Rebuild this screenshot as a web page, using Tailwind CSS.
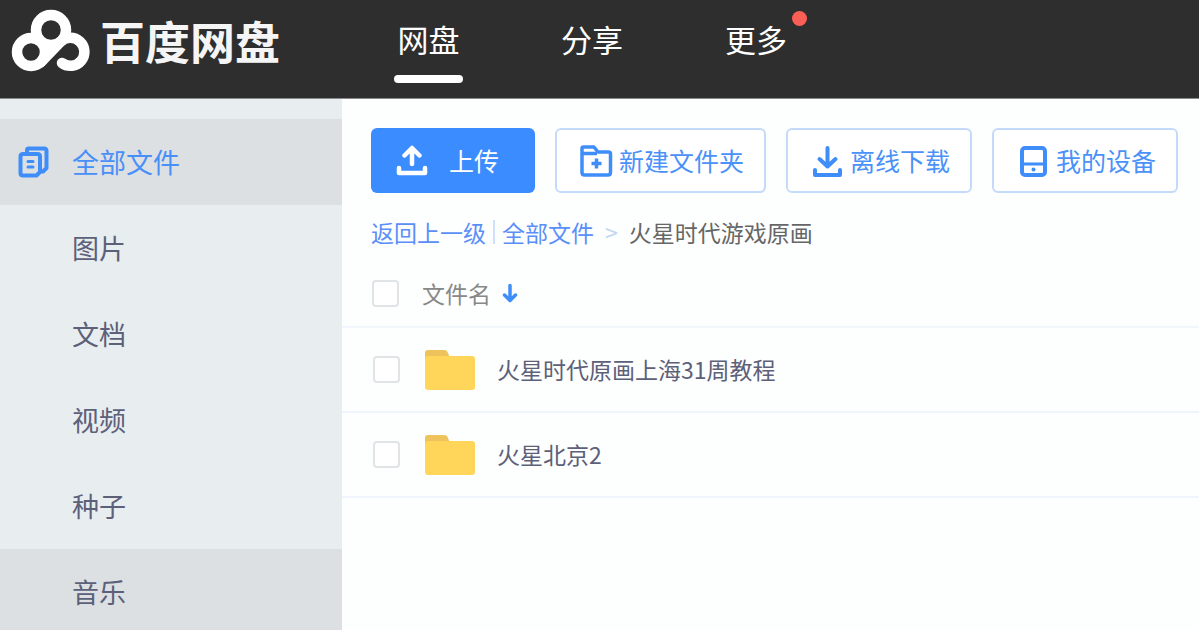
<!DOCTYPE html>
<html lang="zh-CN">
<head>
<meta charset="utf-8">
<meta name="viewport" content="width=device-width, initial-scale=1">
<title>百度网盘</title>
<script src="https://cdn.jsdelivr.net/npm/@tailwindcss/browser@4"></script>
</head>
<body class="flex h-screen flex-col overflow-hidden bg-[#fdfefe] font-['Noto_Sans_CJK_SC',sans-serif]">
<header class="flex h-[99px] shrink-0 border-b border-[#8a8a8a] bg-[#2e2e2e] text-white">
  <a href="#" class="flex w-[342px] items-start pl-[10px] pt-2">
    <svg class="mr-2 h-[66px] w-[82px] shrink-0" viewBox="0 0 82 66" fill="none" stroke="#fff" stroke-width="10.500" stroke-linecap="round" aria-hidden="true">
      <path d="M30 30H55V36L34 56L28 52L31 44Z" fill="#fff" stroke="none"/>
      <circle cx="41" cy="22" r="15" fill="#2e2e2e"/>
      <circle cx="21" cy="44" r="14" fill="#2e2e2e"/>
      <path d="M30.700 54.300L50.700 33.700A14 14 0 1 1 52 55"/>
    </svg>
    <span class="whitespace-nowrap text-[45px] font-bold leading-[65px] text-[#f5f5f5]">百度网盘</span>
  </a>
  <nav class="flex gap-[98px] pl-[52px] pt-4 text-[31px] leading-[45px]">
    <a href="#" class="flex flex-col items-center"><span>网盘</span><span class="mt-[14px] h-2 w-[69px] rounded-full bg-white"></span></a>
    <a href="#">分享</a>
    <a href="#" class="relative ml-1">更多<span class="absolute -right-5 -top-[5px] size-[15px] rounded-full bg-[#fa5f56]"></span></a>
  </nav>
</header>
<div class="flex min-h-0 flex-1">
  <aside class="w-[342px] shrink-0 overflow-hidden bg-[#e8edf0] pt-5 text-[27px] text-[#5c6078]">
    <a href="#" class="flex h-[86px] items-center bg-[#dce0e3] pl-[18px] text-[#488ff8]">
      <svg class="mr-[22px] size-8 shrink-0" viewBox="0 0 32 32" fill="none" stroke="#3f8df9" stroke-width="4" stroke-linejoin="round" stroke-linecap="round" aria-hidden="true">
        <path d="M9 5.500V4Q9 2.500 10.500 2.500H26Q28.500 2.500 28.500 5V22L25 25.500H24"/>
        <path d="M5 8H19.500Q22 8 22 10.500V26L18.500 29.500H5Q2.500 29.500 2.500 27V10.500Q2.500 8 5 8Z"/>
        <path d="M10 15.500h5M10 21h5" stroke-width="3"/>
      </svg>全部文件</a>
    <a href="#" class="flex h-[86px] items-center pl-[72px]">图片</a>
    <a href="#" class="flex h-[86px] items-center pl-[72px]">文档</a>
    <a href="#" class="flex h-[86px] items-center pl-[72px]">视频</a>
    <a href="#" class="flex h-[86px] items-center pl-[72px]">种子</a>
    <a href="#" class="flex h-[86px] items-center bg-[#dce0e3] pl-[72px]">音乐</a>
  </aside>
  <main class="min-w-0 flex-1 pt-[29px]">
    <div class="flex gap-5 whitespace-nowrap pl-[29px] text-[25px] text-[#4a91f8]">
      <button class="flex h-[65px] items-center rounded-md bg-[#3b8cff] pl-[25px] pr-9 text-white">
        <svg class="mr-[21px] size-8" viewBox="0 0 32 32" fill="none" stroke="currentColor" stroke-width="4.500" stroke-linecap="round" stroke-linejoin="round" aria-hidden="true"><path d="M16 19V4M8.500 10.500l7.500-7.500 7.500 7.500M3 23v5h26v-5"/></svg>上传</button>
      <button class="flex h-[65px] items-center gap-[6px] rounded-md border-2 border-[#c4dafa] bg-white pl-[22px] pr-5">
        <svg class="size-[34px]" viewBox="0 0 34 34" fill="none" stroke="#3f8df9" stroke-width="3.500" stroke-linejoin="round" aria-hidden="true"><path d="M3 9.500V4.500Q3 3 4.500 3H15l4 5H29.500Q31.500 8 31.500 10V28.500Q31.500 31 29 31H5.500Q3 31 3 28.500V9.500H18M17.500 14.500v10M12.500 19.500h10"/></svg>新建文件夹</button>
      <button class="flex h-[65px] items-center gap-[6px] rounded-md border-2 border-[#c4dafa] bg-white pl-[22px] pr-5">
        <svg class="size-[34px]" viewBox="0 0 34 34" fill="none" stroke="#3f8df9" stroke-width="4" stroke-linecap="round" stroke-linejoin="round" aria-hidden="true"><path d="M17.500 4v18M9.500 15l8 7.500 8-7.500M5 26v5h25v-5"/></svg>离线下载</button>
      <button class="flex h-[65px] items-center gap-[6px] rounded-md border-2 border-[#c4dafa] bg-white pl-[22px] pr-5">
        <svg class="size-[34px]" viewBox="0 0 34 34" fill="none" stroke="#3f8df9" stroke-width="4" aria-hidden="true"><rect x="6" y="4" width="23" height="27" rx="3"/><path d="M6 20h23" stroke-width="3"/><circle cx="17.500" cy="25.500" r="2" fill="#3f8df9" stroke="none"/></svg>我的设备</button>
    </div>
    <div class="mt-[22px] flex h-[34px] items-center whitespace-nowrap pl-[29px] text-[23px] text-[#5b8ff8]">
      <a href="#">返回上一级</a>
      <span class="mx-[7px] h-6 w-[2px] bg-[#d0e0fb]"></span>
      <a href="#">全部文件</a>
      <span class="mx-[11px] text-[#c0d6ee]">&gt;</span>
      <span class="text-[#666]">火星时代游戏原画</span>
    </div>
    <table class="mt-[11px] w-full border-collapse text-left text-[23px]">
      <thead>
        <tr class="h-[67px] border-b-2 border-[#f2f6fd] text-[#888]">
          <th class="w-20 pl-[30px] font-normal"><input type="checkbox" aria-label="全选" class="block size-[27px] appearance-none rounded-sm border-2 border-[#e0e4e6] bg-white"></th>
          <th class="font-normal"><div class="flex items-center">文件名
            <svg class="ml-[11px] h-5 w-4" viewBox="0 0 16 20" fill="none" stroke="#3f8df9" stroke-width="3.500" stroke-linecap="round" stroke-linejoin="round" aria-hidden="true"><path d="M8 2.500V17M2.500 12L8 17.500 13.500 12"/></svg></div></th>
        </tr>
      </thead>
      <tbody class="text-[#5c6078]">
        <tr class="h-[85px] border-b-2 border-[#f0f4fd]">
          <td class="pl-[31px]"><input id="f1" type="checkbox" class="block size-[27px] appearance-none rounded-sm border-2 border-[#e0e4e6] bg-white"></td>
          <td><label for="f1" class="flex items-center">
            <svg class="mr-[21px] h-[42px] w-[54px]" viewBox="0 0 54 42" aria-hidden="true"><path d="M3 12V4Q3 1 6 1H22Q25 1 26 4L28 9V12Z" fill="#efc35b"/><rect x="3" y="7" width="50" height="34" rx="3" fill="#ffd55a"/></svg>火星时代原画上海31周教程</label></td>
        </tr>
        <tr class="h-[85px] border-b-2 border-[#f0f4fd]">
          <td class="pl-[31px]"><input id="f2" type="checkbox" class="block size-[27px] appearance-none rounded-sm border-2 border-[#e0e4e6] bg-white"></td>
          <td><label for="f2" class="flex items-center">
            <svg class="mr-[21px] h-[42px] w-[54px]" viewBox="0 0 54 42" aria-hidden="true"><path d="M3 12V4Q3 1 6 1H22Q25 1 26 4L28 9V12Z" fill="#efc35b"/><rect x="3" y="7" width="50" height="34" rx="3" fill="#ffd55a"/></svg>火星北京2</label></td>
        </tr>
      </tbody>
    </table>
  </main>
</div>
</body>
</html>
